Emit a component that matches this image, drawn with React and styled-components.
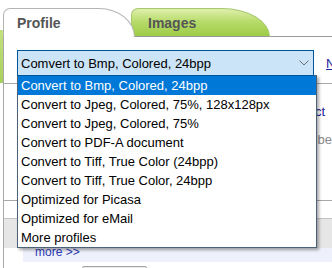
import styled, { createGlobalStyle } from "styled-components";

const Global = createGlobalStyle`
  html, body {
    margin: 0;
    padding: 0;
    background: #fff;
  }
`;

const Frame = styled.div`
  display: flex;
  width: 332px;
  height: 268px;
  overflow: hidden;
  background: #fff;
  font-family: "Liberation Sans", Arial, sans-serif;
`;

const Gutter = styled.div`
  flex: none;
  width: 3px;
  background: linear-gradient(
    to bottom,
    transparent 30px,
    #c3e27f 30px,
    #a8d05a 83px,
    transparent 83px
  );
`;

const Main = styled.div`
  flex: 1;
  min-width: 0;
  display: flex;
  flex-direction: column;
`;

const TabBar = styled.div`
  display: flex;
  align-items: flex-end;
  height: 37px;
  padding-top: 8px;
  box-sizing: border-box;
`;

const Tab = styled.div`
  position: relative;
  flex: none;
  box-sizing: border-box;
  height: 29px;
  padding-top: 6px;
  font-size: 14px;
  font-weight: bold;
  line-height: 16px;
  color: #555;
  border: 1px solid ${(p) => (p.$active ? "#b4b4b4" : "#a6c86e")};
  border-bottom: ${(p) => (p.$active ? "none" : "1px solid #9a9a9a")};
  background: ${(p) =>
    p.$active
      ? "#fff"
      : "linear-gradient(to bottom, #dff0ad, #b8dc6c 45%, #9dcb47)"};
  z-index: ${(p) => (p.$active ? 2 : 1)};
  width: ${(p) => p.$width}px;
  margin-left: ${(p) => (p.$active ? 0 : -4)}px;
  padding-left: ${(p) => (p.$active ? 13 : 16)}px;
  border-radius: ${(p) =>
    p.$active ? "7px 36px 0 0 / 7px 29px 0 0" : "7px 48px 0 0 / 7px 29px 0 0"};
`;

const TabLine = styled.div`
  flex: 1;
  height: 1px;
  background: #9a9a9a;
`;

const Panel = styled.div`
  flex: 1;
  display: flex;
  flex-direction: column;
  border-left: 1px solid #a8a8a8;
  padding-top: 13px;
`;

const ProfileRow = styled.div`
  display: flex;
  align-items: center;
  height: 26px;
  white-space: nowrap;
`;

const SelectWrap = styled.div`
  position: relative;
  flex: none;
  width: 297px;
  margin-left: 13px;
  z-index: 3;
`;

const SelectBox = styled.div`
  position: relative;
  z-index: 1;
  display: flex;
  align-items: center;
  justify-content: space-between;
  box-sizing: border-box;
  height: 26px;
  padding: 0 4px 0 3px;
  border: 1px solid #005499;
  background: #cce4f7;
  font-size: 13px;
  color: #000;
`;

const List = styled.ul`
  position: absolute;
  top: 25px;
  left: 0;
  width: 300px;
  box-sizing: border-box;
  margin: 0;
  padding: 0;
  list-style: none;
  background: #fff;
  border: 1px solid #4c6279;
  box-shadow: 2px 2px 3px rgba(0, 0, 0, 0.35);
`;

const Item = styled.li`
  height: 19px;
  line-height: 19px;
  padding-left: 3px;
  font-size: 13px;
  white-space: nowrap;
  color: ${(p) => (p.$selected ? "#fff" : "#000")};
  background: ${(p) => (p.$selected ? "#0078d7" : "transparent")};
`;

const SideLink = styled.span`
  margin-left: 12px;
  font-size: 13px;
  color: #22229a;
  text-decoration: underline;
`;

const Divider = styled.div`
  height: 1px;
  background: #a8a8a8;
  margin-top: ${(p) => p.$gap}px;
`;

const LinkRow = styled.div`
  display: flex;
  justify-content: flex-end;
  margin-top: 20px;
  padding-right: 7px;
  font-size: 13px;
  line-height: 16px;
  color: #22229a;
`;

const GreyText = styled.div`
  margin-top: 12px;
  margin-left: 286px;
  font-size: 13px;
  line-height: 16px;
  color: #8a8a8a;
  white-space: nowrap;
`;

const Band = styled.div`
  margin-top: 17px;
  height: 30px;
  box-sizing: border-box;
  background: #e6e6e6;
  border-top: 1px solid #c4c4c4;
`;

const MoreBar = styled.div`
  margin-left: 19px;
  height: 14px;
  padding-left: 12px;
  background: #eef0fb;
  font-size: 12px;
  line-height: 9px;
  color: #2a3bb5;
`;

const StubButton = styled.div`
  margin: 4px 0 0 78px;
  width: 65px;
  height: 10px;
  box-sizing: border-box;
  border: 1px solid #a5a5a5;
  border-radius: 2px;
  background: #e9e9e9;
`;

function Chevron() {
  return (
    <svg width="10" height="6" viewBox="0 0 10 6">
      <polyline points="0.5,0.5 5,5 9.5,0.5" fill="none" stroke="#6d6d6d" strokeWidth="1" />
    </svg>
  );
}

const current = "Comvert to Bmp, Colored, 24bpp";

const profiles = [
  "Convert to Bmp, Colored, 24bpp",
  "Convert to Jpeg, Colored, 75%, 128x128px",
  "Convert to Jpeg, Colored, 75%",
  "Convert to PDF-A document",
  "Convert to Tiff, True Color (24bpp)",
  "Convert to Tiff, True Color, 24bpp",
  "Optimized  for Picasa",
  "Optimized for eMail",
  "More profiles",
];

export default function App() {
  const selected = 0;

  return (
    <>
      <Global />
      <Frame>
        <Gutter />
        <Main>
          <TabBar>
            <Tab $active $width={132}>Profile</Tab>
            <Tab $width={139}>Images</Tab>
            <TabLine />
          </TabBar>

          <Panel>
            <ProfileRow>
              <SelectWrap>
                <SelectBox>
                  <span>{current}</span>
                  <Chevron />
                </SelectBox>
                <List>
                  {profiles.map((p, i) => (
                    <Item key={i} $selected={i === selected}>
                      {p}
                    </Item>
                  ))}
                </List>
              </SelectWrap>
              <SideLink>New</SideLink>
            </ProfileRow>

            <Divider $gap={7} />
            <LinkRow>Select</LinkRow>
            <GreyText>Number</GreyText>
            <Divider $gap={52} />
            <Band />
            <MoreBar>more &gt;&gt;</MoreBar>
            <StubButton />
          </Panel>
        </Main>
      </Frame>
    </>
  );
}
